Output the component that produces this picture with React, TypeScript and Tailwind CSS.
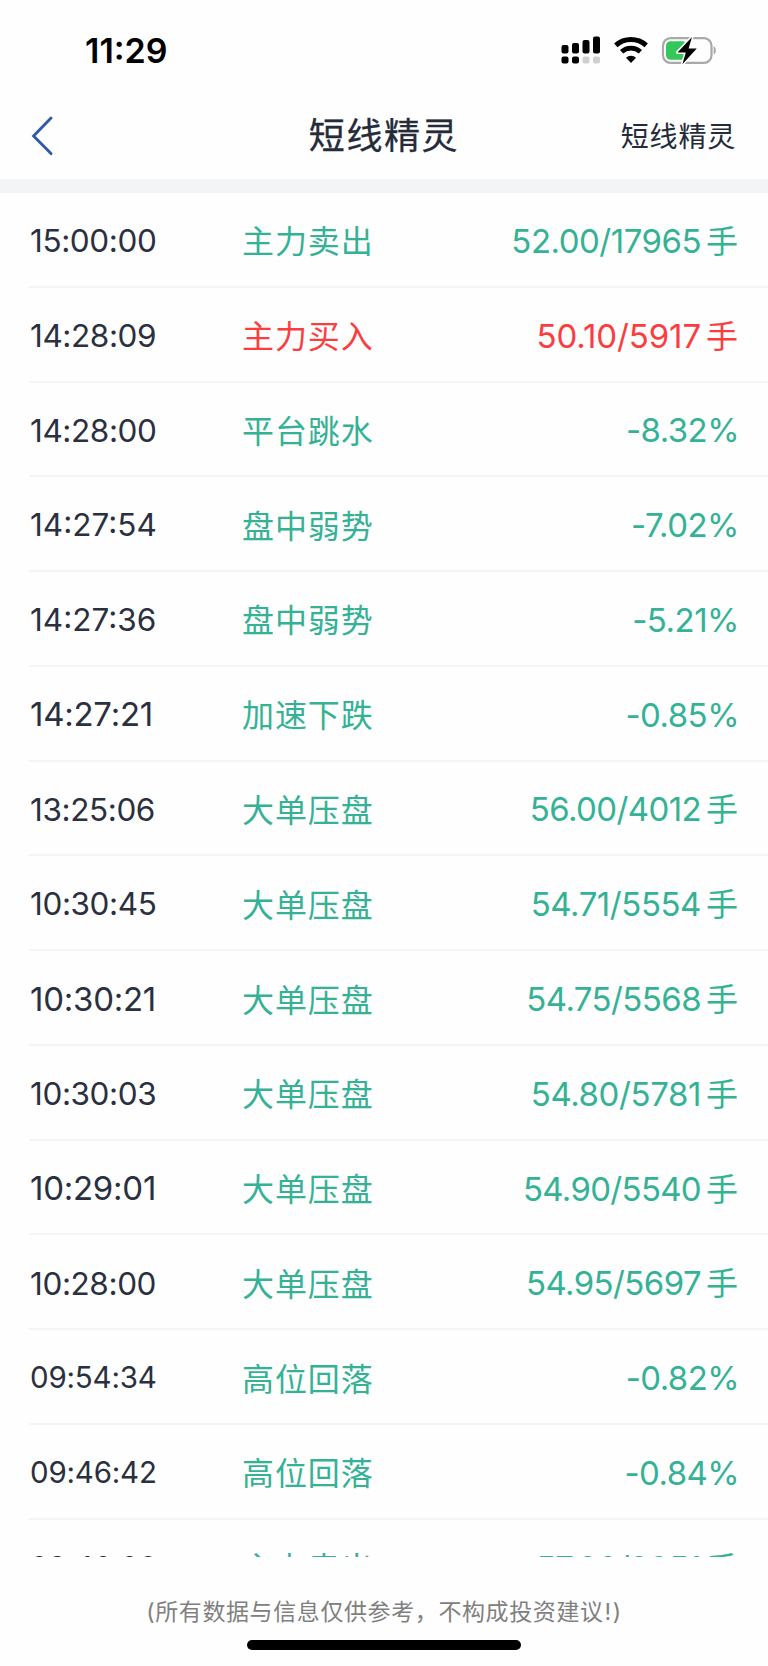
type Tone = 'down' | 'up';

interface Entry {
  time: string;
  label: string;
  value: string;
  unit?: string;
  tone?: Tone;
  // wide times are set smaller so they all fit the same column
  timeClass: string;
  valueClass: string;
}

const TIME_LG = 'text-[33px] tracking-[-0.25px]';
const TIME_MD = 'text-[31.5px] tracking-[-0.4px]';
const TIME_MD_LOOSE = 'text-[31.5px] tracking-[0px]';
const TIME_SM = 'text-[29.5px] tracking-[-0.2px]';

const entries: Entry[] = [
  { time: '15:00:00', label: '主力卖出', value: '52.00/17965', unit: '手', timeClass: TIME_MD, valueClass: 'tracking-[-0.5px]' },
  { time: '14:28:09', label: '主力买入', value: '50.10/5917', unit: '手', tone: 'up', timeClass: TIME_MD, valueClass: 'tracking-[-0.1px]' },
  { time: '14:28:00', label: '平台跳水', value: '-8.32%', timeClass: TIME_MD, valueClass: 'tracking-[-0.55px]' },
  { time: '14:27:54', label: '盘中弱势', value: '-7.02%', timeClass: TIME_MD_LOOSE, valueClass: 'tracking-[-0.5px]' },
  { time: '14:27:36', label: '盘中弱势', value: '-5.21%', timeClass: TIME_MD_LOOSE, valueClass: 'tracking-[-0.5px]' },
  { time: '14:27:21', label: '加速下跌', value: '-0.85%', timeClass: TIME_LG, valueClass: 'tracking-[-0.55px]' },
  { time: '13:25:06', label: '大单压盘', value: '56.00/4012', unit: '手', timeClass: TIME_MD, valueClass: 'tracking-[-0.6px]' },
  { time: '10:30:45', label: '大单压盘', value: '54.71/5554', unit: '手', timeClass: TIME_MD, valueClass: 'tracking-[-0.45px]' },
  { time: '10:30:21', label: '大单压盘', value: '54.75/5568', unit: '手', timeClass: TIME_LG, valueClass: 'tracking-[-0.6px]' },
  { time: '10:30:03', label: '大单压盘', value: '54.80/5781', unit: '手', timeClass: TIME_MD, valueClass: 'tracking-[-0.4px]' },
  { time: '10:29:01', label: '大单压盘', value: '54.90/5540', unit: '手', timeClass: TIME_LG, valueClass: 'tracking-[-0.7px]' },
  { time: '10:28:00', label: '大单压盘', value: '54.95/5697', unit: '手', timeClass: TIME_MD, valueClass: 'tracking-[-0.6px]' },
  { time: '09:54:34', label: '高位回落', value: '-0.82%', timeClass: TIME_SM, valueClass: 'tracking-[-0.6px]' },
  { time: '09:46:42', label: '高位回落', value: '-0.84%', timeClass: TIME_SM, valueClass: 'tracking-[-0.6px]' },
  { time: '09:40:00', label: '主力卖出', value: '57.00/2051', unit: '手', timeClass: TIME_SM, valueClass: 'tracking-[-0.6px]' },
];

const StatusBar = () => (
  <div className="flex h-[100px] shrink-0 items-center justify-between pl-[85px] pr-[52px]">
    <span className="pt-[2px] text-[34px] font-semibold leading-none tracking-[0px] text-black">11:29</span>
    <svg width="156" height="30" viewBox="0 0 156 30" fill="none">
      <g fill="#000">
        <rect x="1.5" y="10" width="7" height="8.5" rx="2" />
        <rect x="12" y="8" width="7" height="10.5" rx="2" />
        <rect x="22.5" y="5" width="7" height="13.5" rx="2" />
        <rect x="33" y="1.5" width="7" height="17" rx="2" />
        <rect x="1.5" y="21.5" width="7" height="7" rx="2" />
        <rect x="12" y="21.5" width="7" height="7" rx="2" />
      </g>
      <g fill="#cfcfcf">
        <rect x="22.5" y="21.5" width="7" height="7" rx="2" />
        <rect x="33" y="21.5" width="7" height="7" rx="2" />
      </g>
      <path d="M55.8 10.4a22.8 22.8 0 0 1 30.4 0" stroke="#000" strokeWidth="5" />
      <path d="M61.6 16.8a14 14 0 0 1 18.8 0" stroke="#000" strokeWidth="4.8" />
      <path d="M71 28l-5-5.2a7 7 0 0 1 10 0z" fill="#000" />
      <rect x="103" y="3.2" width="48.5" height="24.6" rx="7.5" stroke="#a9a9a9" strokeWidth="2.2" />
      <path d="M153.6 11.3c3 1 3 7.4 0 8.4z" fill="#a9a9a9" />
      <rect x="106" y="6.2" width="21" height="18.6" rx="4.5" fill="#34c759" />
      <path
        d="M132 2L117.5 17.4h8.3l-3.4 11.8L136.8 13.4h-8.2z"
        fill="#000"
        stroke="#fff"
        strokeWidth="3"
        strokeLinejoin="round"
        paintOrder="stroke"
      />
    </svg>
  </div>
);

const Header = () => (
  <header className="grid h-[79px] shrink-0 grid-cols-[1fr_auto_1fr] items-center pl-[31px] pr-[32px] pb-[7px] text-[#252b3a]">
    <svg width="24" height="40" viewBox="0 0 24 40" fill="none">
      <path d="M20 2L2.6 20 20 37.6" stroke="#2f5aa8" strokeWidth="2.9" strokeLinecap="round" />
    </svg>
    <h1 className="pl-[1px] text-[36px] leading-none tracking-[1.6px] [-webkit-text-stroke:0.3px_#252b3a]">短线精灵</h1>
    <span className="justify-self-end pt-[2px] text-[28px] leading-none tracking-[0.8px]">短线精灵</span>
  </header>
);

const EntryRow = ({ time, label, value, unit, tone = 'down', timeClass, valueClass }: Entry) => (
  <li
    className={`ml-[29px] grid h-[94.77px] shrink-0 grid-cols-[213px_1fr_auto] items-center border-b-2 border-[#f4f5f8] ${
      unit ? 'pr-[30px]' : 'pr-[29px]'
    } ${tone === 'up' ? 'text-[#fb3d40]' : 'text-[#35b295]'}`}
  >
    <span className={`pl-[1px] pt-[3px] leading-none text-[#2b3040] ${timeClass}`}>{time}</span>
    <span className="pt-[6px] text-[32px] leading-none tracking-[0.9px]">{label}</span>
    <span className="flex items-center pt-[4px] text-[33px] leading-none">
      <span className={valueClass}>{value}</span>
      {unit && <span className="ml-[5px] pt-[1px] text-[32px]">{unit}</span>}
    </span>
  </li>
);

export default function App() {
  return (
    <div className="flex h-[1666px] w-[768px] flex-col overflow-hidden bg-[#fefefe] font-[Inter,'Noto_Sans_CJK_SC',sans-serif]">
      <StatusBar />
      <Header />
      <div className="h-[14px] shrink-0 bg-[#f3f4f6]" />
      <ul className="flex h-[1364px] shrink-0 flex-col overflow-hidden">
        {entries.map((entry) => (
          <EntryRow key={entry.time} {...entry} />
        ))}
      </ul>
      <footer className="flex flex-1 flex-col items-center pt-[43px]">
        <p className="text-[23px] leading-[24px] tracking-[0.6px] text-[#808080]">
          (所有数据与信息仅供参考，不构成投资建议<span className="px-[1px]">!</span>)
        </p>
        <div className="mt-[16px] h-[10px] w-[274px] rounded-full bg-black" />
      </footer>
    </div>
  );
}
